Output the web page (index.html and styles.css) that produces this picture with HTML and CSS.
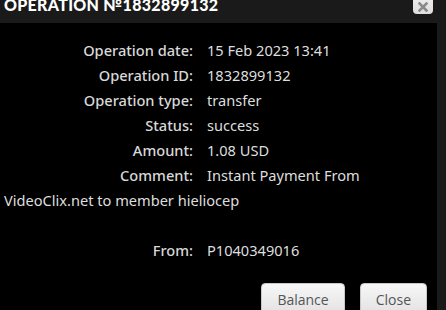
FILE: index.html
```html
<!DOCTYPE html>
<html lang="en">
<head>
    <meta charset="UTF-8">
    <meta name="viewport" content="width=device-width, initial-scale=1.0">
    <title>Operation</title>
    <link rel="stylesheet" href="styles.css">
</head>
<body>
    <div class="dialog">
        <div class="titlebar">
            <span class="title">OPERATION №1832899132</span>
            <button class="btn-x" title="close">
                <svg width="10" height="10" viewBox="0 0 10 10">
                    <path d="M1.5 1.5 L8.5 8.5 M8.5 1.5 L1.5 8.5" stroke="#8a8a8a" stroke-width="2.6" stroke-linecap="square"/>
                </svg>
            </button>
        </div>

        <div class="content">
            <div class="row"><span class="label">Operation date:</span><span class="value">15 Feb 2023 13:41</span></div>
            <div class="row"><span class="label">Operation ID:</span><span class="value">1832899132</span></div>
            <div class="row"><span class="label">Operation type:</span><span class="value">transfer</span></div>
            <div class="row"><span class="label">Status:</span><span class="value">success</span></div>
            <div class="row"><span class="label">Amount:</span><span class="value">1.08 USD</span></div>
            <div class="row"><span class="label">Comment:</span><span class="value">Instant Payment From VideoClix.net to member hieliocep</span></div>
            <div class="row row-gap"><span class="label">From:</span><span class="value">P1040349016</span></div>

            <div class="buttons">
                <button class="btn">Balance</button>
                <button class="btn">Close</button>
            </div>
        </div>
    </div>
</body>
</html>
```

FILE: styles.css
```css
body {
    margin: 0;
    padding: 0;
    background: #1a1a1a;
    overflow: hidden;
}

.dialog {
    background: #1a1a1a;
    padding-right: 9px;
    height: 310px;
}

.titlebar {
    position: relative;
    height: 23px;
    overflow: hidden;
}

.title {
    display: block;
    margin-top: -6px;
    padding-left: 4px;
    font-family: 'Lato', sans-serif;
    font-weight: 900;
    font-size: 16px;
    letter-spacing: 0.3px;
    color: #fff;
    line-height: 22px;
}

.btn-x {
    position: absolute;
    right: 4px;
    top: -6px;
    width: 20px;
    height: 20px;
    padding: 6px 0 0;
    border: none;
    border-radius: 4px;
    background: linear-gradient(#f0f0f0, #dedede);
    display: flex;
    justify-content: center;
    align-items: center;
}

.content {
    background: #000;
    height: 287px;
    padding-top: 15px;
    box-sizing: border-box;
    font-family: 'Noto Sans', sans-serif;
    font-size: 14.6px;
    color: #dedede;
    line-height: 25px;
    padding-left: 4px;
}

.label {
    display: inline-block;
    width: 189px;
    text-align: right;
    padding-right: 14px;
    font-weight: 500;
    color: #d8d8d8;
}

.row-gap {
    margin-top: 25px;
}

.buttons {
    display: flex;
    justify-content: flex-end;
    gap: 15px;
    padding-right: 10px;
    margin-top: 20px;
}

.btn {
    font-family: 'Open Sans', sans-serif;
    font-size: 14px;
    color: #555;
    background: linear-gradient(#f7f7f7, #e2e2e2);
    border: 1px solid #c8c8c8;
    border-radius: 4px;
    height: 32px;
    padding: 0 15px;
}
```
